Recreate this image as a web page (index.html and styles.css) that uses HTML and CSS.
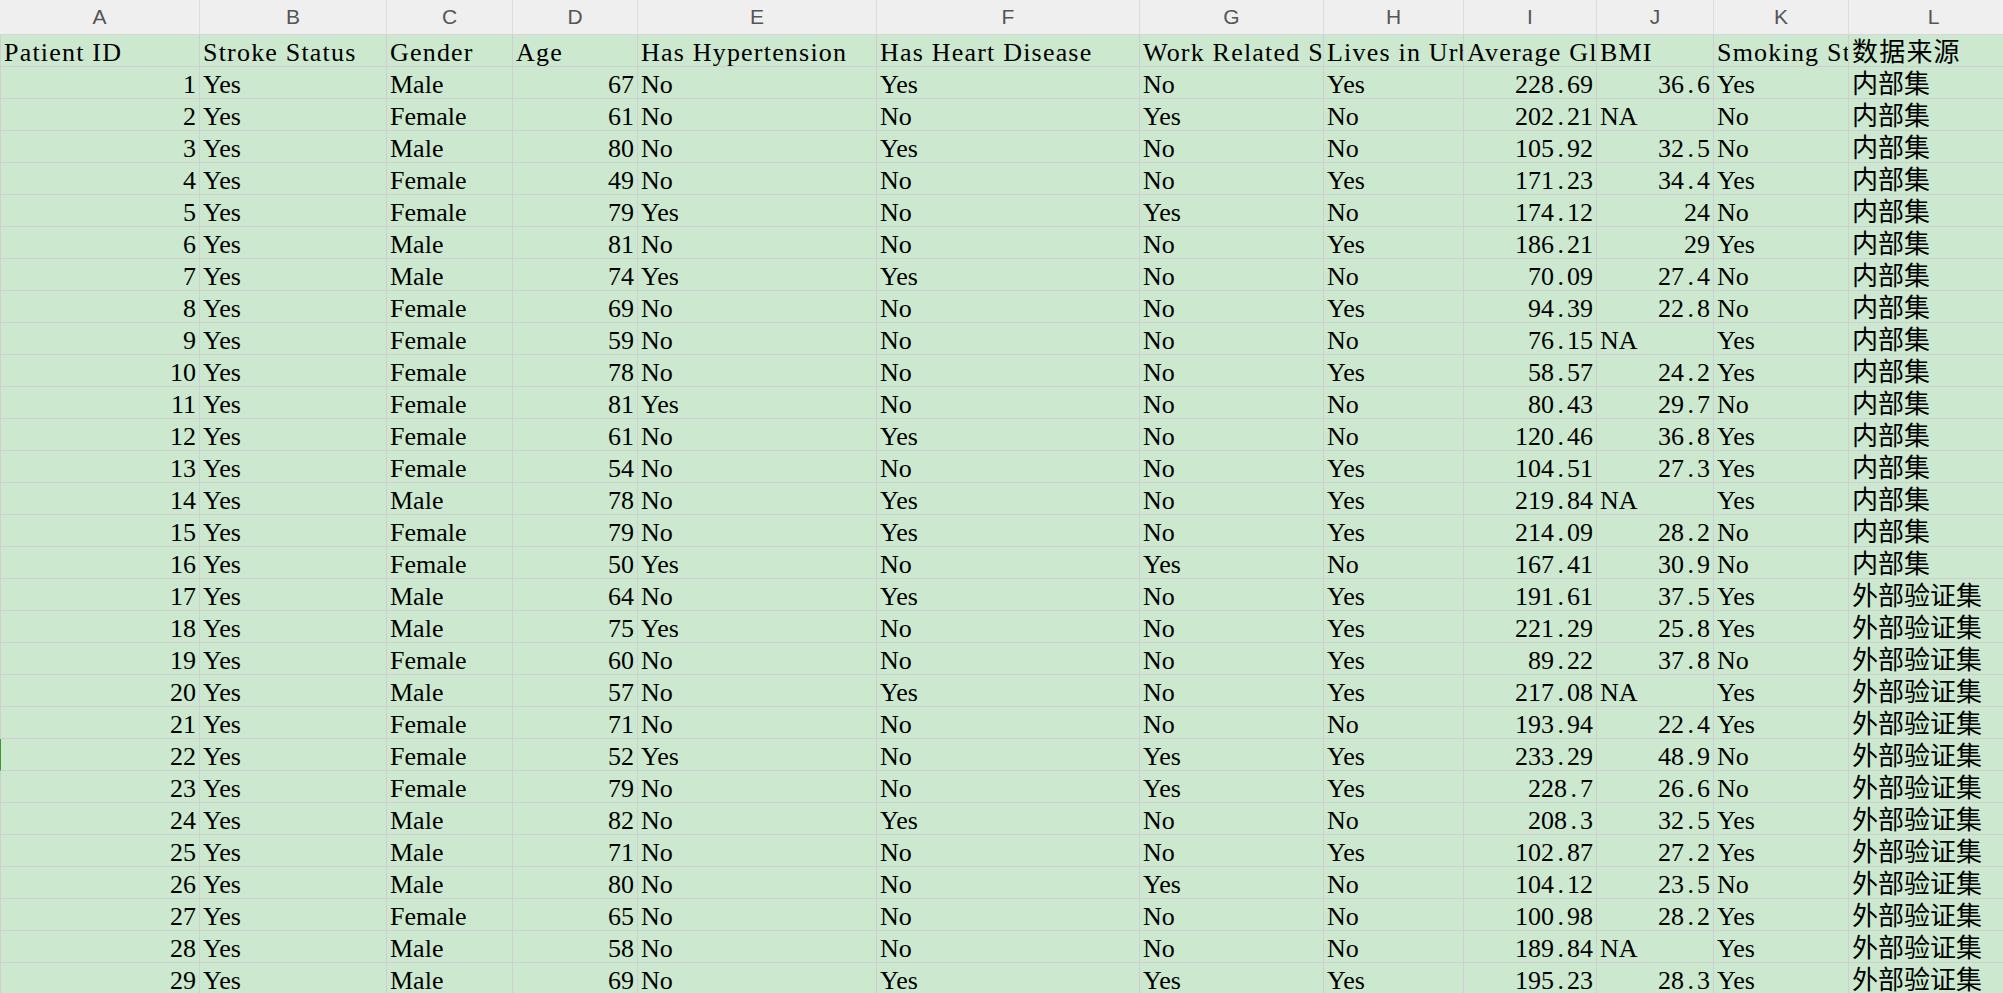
FILE: index.html
```html
<!DOCTYPE html>
<html lang="zh-CN">
<head>
<meta charset="utf-8">
<title>Sheet</title>
<link rel="stylesheet" href="styles.css">
</head>
<body>
<div class="sheet">
  <div class="colhead">
    <div class="ch">A</div><div class="ch">B</div><div class="ch">C</div><div class="ch">D</div><div class="ch">E</div><div class="ch">F</div><div class="ch">G</div><div class="ch">H</div><div class="ch">I</div><div class="ch">J</div><div class="ch">K</div><div class="ch">L</div>
  </div>
  <div class="row head">
    <div class="c">Patient ID</div><div class="c">Stroke Status</div><div class="c">Gender</div><div class="c">Age</div><div class="c">Has Hypertension</div><div class="c">Has Heart Disease</div><div class="c">Work Related Stress</div><div class="c">Lives in Urban Area</div><div class="c">Average Glucose Level</div><div class="c">BMI</div><div class="c">Smoking Status</div><div class="c">数据来源</div>
  </div>
  <div class="row"><div class="c n">1</div><div class="c">Yes</div><div class="c">Male</div><div class="c n">67</div><div class="c">No</div><div class="c">Yes</div><div class="c">No</div><div class="c">Yes</div><div class="c n">228<span class="dp">.</span>69</div><div class="c n">36<span class="dp">.</span>6</div><div class="c">Yes</div><div class="c">内部集</div></div>
  <div class="row"><div class="c n">2</div><div class="c">Yes</div><div class="c">Female</div><div class="c n">61</div><div class="c">No</div><div class="c">No</div><div class="c">Yes</div><div class="c">No</div><div class="c n">202<span class="dp">.</span>21</div><div class="c">NA</div><div class="c">No</div><div class="c">内部集</div></div>
  <div class="row"><div class="c n">3</div><div class="c">Yes</div><div class="c">Male</div><div class="c n">80</div><div class="c">No</div><div class="c">Yes</div><div class="c">No</div><div class="c">No</div><div class="c n">105<span class="dp">.</span>92</div><div class="c n">32<span class="dp">.</span>5</div><div class="c">No</div><div class="c">内部集</div></div>
  <div class="row"><div class="c n">4</div><div class="c">Yes</div><div class="c">Female</div><div class="c n">49</div><div class="c">No</div><div class="c">No</div><div class="c">No</div><div class="c">Yes</div><div class="c n">171<span class="dp">.</span>23</div><div class="c n">34<span class="dp">.</span>4</div><div class="c">Yes</div><div class="c">内部集</div></div>
  <div class="row"><div class="c n">5</div><div class="c">Yes</div><div class="c">Female</div><div class="c n">79</div><div class="c">Yes</div><div class="c">No</div><div class="c">Yes</div><div class="c">No</div><div class="c n">174<span class="dp">.</span>12</div><div class="c n">24</div><div class="c">No</div><div class="c">内部集</div></div>
  <div class="row"><div class="c n">6</div><div class="c">Yes</div><div class="c">Male</div><div class="c n">81</div><div class="c">No</div><div class="c">No</div><div class="c">No</div><div class="c">Yes</div><div class="c n">186<span class="dp">.</span>21</div><div class="c n">29</div><div class="c">Yes</div><div class="c">内部集</div></div>
  <div class="row"><div class="c n">7</div><div class="c">Yes</div><div class="c">Male</div><div class="c n">74</div><div class="c">Yes</div><div class="c">Yes</div><div class="c">No</div><div class="c">No</div><div class="c n">70<span class="dp">.</span>09</div><div class="c n">27<span class="dp">.</span>4</div><div class="c">No</div><div class="c">内部集</div></div>
  <div class="row"><div class="c n">8</div><div class="c">Yes</div><div class="c">Female</div><div class="c n">69</div><div class="c">No</div><div class="c">No</div><div class="c">No</div><div class="c">Yes</div><div class="c n">94<span class="dp">.</span>39</div><div class="c n">22<span class="dp">.</span>8</div><div class="c">No</div><div class="c">内部集</div></div>
  <div class="row"><div class="c n">9</div><div class="c">Yes</div><div class="c">Female</div><div class="c n">59</div><div class="c">No</div><div class="c">No</div><div class="c">No</div><div class="c">No</div><div class="c n">76<span class="dp">.</span>15</div><div class="c">NA</div><div class="c">Yes</div><div class="c">内部集</div></div>
  <div class="row"><div class="c n">10</div><div class="c">Yes</div><div class="c">Female</div><div class="c n">78</div><div class="c">No</div><div class="c">No</div><div class="c">No</div><div class="c">Yes</div><div class="c n">58<span class="dp">.</span>57</div><div class="c n">24<span class="dp">.</span>2</div><div class="c">Yes</div><div class="c">内部集</div></div>
  <div class="row"><div class="c n">11</div><div class="c">Yes</div><div class="c">Female</div><div class="c n">81</div><div class="c">Yes</div><div class="c">No</div><div class="c">No</div><div class="c">No</div><div class="c n">80<span class="dp">.</span>43</div><div class="c n">29<span class="dp">.</span>7</div><div class="c">No</div><div class="c">内部集</div></div>
  <div class="row"><div class="c n">12</div><div class="c">Yes</div><div class="c">Female</div><div class="c n">61</div><div class="c">No</div><div class="c">Yes</div><div class="c">No</div><div class="c">No</div><div class="c n">120<span class="dp">.</span>46</div><div class="c n">36<span class="dp">.</span>8</div><div class="c">Yes</div><div class="c">内部集</div></div>
  <div class="row"><div class="c n">13</div><div class="c">Yes</div><div class="c">Female</div><div class="c n">54</div><div class="c">No</div><div class="c">No</div><div class="c">No</div><div class="c">Yes</div><div class="c n">104<span class="dp">.</span>51</div><div class="c n">27<span class="dp">.</span>3</div><div class="c">Yes</div><div class="c">内部集</div></div>
  <div class="row"><div class="c n">14</div><div class="c">Yes</div><div class="c">Male</div><div class="c n">78</div><div class="c">No</div><div class="c">Yes</div><div class="c">No</div><div class="c">Yes</div><div class="c n">219<span class="dp">.</span>84</div><div class="c">NA</div><div class="c">Yes</div><div class="c">内部集</div></div>
  <div class="row"><div class="c n">15</div><div class="c">Yes</div><div class="c">Female</div><div class="c n">79</div><div class="c">No</div><div class="c">Yes</div><div class="c">No</div><div class="c">Yes</div><div class="c n">214<span class="dp">.</span>09</div><div class="c n">28<span class="dp">.</span>2</div><div class="c">No</div><div class="c">内部集</div></div>
  <div class="row"><div class="c n">16</div><div class="c">Yes</div><div class="c">Female</div><div class="c n">50</div><div class="c">Yes</div><div class="c">No</div><div class="c">Yes</div><div class="c">No</div><div class="c n">167<span class="dp">.</span>41</div><div class="c n">30<span class="dp">.</span>9</div><div class="c">No</div><div class="c">内部集</div></div>
  <div class="row"><div class="c n">17</div><div class="c">Yes</div><div class="c">Male</div><div class="c n">64</div><div class="c">No</div><div class="c">Yes</div><div class="c">No</div><div class="c">Yes</div><div class="c n">191<span class="dp">.</span>61</div><div class="c n">37<span class="dp">.</span>5</div><div class="c">Yes</div><div class="c">外部验证集</div></div>
  <div class="row"><div class="c n">18</div><div class="c">Yes</div><div class="c">Male</div><div class="c n">75</div><div class="c">Yes</div><div class="c">No</div><div class="c">No</div><div class="c">Yes</div><div class="c n">221<span class="dp">.</span>29</div><div class="c n">25<span class="dp">.</span>8</div><div class="c">Yes</div><div class="c">外部验证集</div></div>
  <div class="row"><div class="c n">19</div><div class="c">Yes</div><div class="c">Female</div><div class="c n">60</div><div class="c">No</div><div class="c">No</div><div class="c">No</div><div class="c">Yes</div><div class="c n">89<span class="dp">.</span>22</div><div class="c n">37<span class="dp">.</span>8</div><div class="c">No</div><div class="c">外部验证集</div></div>
  <div class="row"><div class="c n">20</div><div class="c">Yes</div><div class="c">Male</div><div class="c n">57</div><div class="c">No</div><div class="c">Yes</div><div class="c">No</div><div class="c">Yes</div><div class="c n">217<span class="dp">.</span>08</div><div class="c">NA</div><div class="c">Yes</div><div class="c">外部验证集</div></div>
  <div class="row"><div class="c n">21</div><div class="c">Yes</div><div class="c">Female</div><div class="c n">71</div><div class="c">No</div><div class="c">No</div><div class="c">No</div><div class="c">No</div><div class="c n">193<span class="dp">.</span>94</div><div class="c n">22<span class="dp">.</span>4</div><div class="c">Yes</div><div class="c">外部验证集</div></div>
  <div class="row sel"><div class="c n">22</div><div class="c">Yes</div><div class="c">Female</div><div class="c n">52</div><div class="c">Yes</div><div class="c">No</div><div class="c">Yes</div><div class="c">Yes</div><div class="c n">233<span class="dp">.</span>29</div><div class="c n">48<span class="dp">.</span>9</div><div class="c">No</div><div class="c">外部验证集</div></div>
  <div class="row"><div class="c n">23</div><div class="c">Yes</div><div class="c">Female</div><div class="c n">79</div><div class="c">No</div><div class="c">No</div><div class="c">Yes</div><div class="c">Yes</div><div class="c n">228<span class="dp">.</span>7</div><div class="c n">26<span class="dp">.</span>6</div><div class="c">No</div><div class="c">外部验证集</div></div>
  <div class="row"><div class="c n">24</div><div class="c">Yes</div><div class="c">Male</div><div class="c n">82</div><div class="c">No</div><div class="c">Yes</div><div class="c">No</div><div class="c">No</div><div class="c n">208<span class="dp">.</span>3</div><div class="c n">32<span class="dp">.</span>5</div><div class="c">Yes</div><div class="c">外部验证集</div></div>
  <div class="row"><div class="c n">25</div><div class="c">Yes</div><div class="c">Male</div><div class="c n">71</div><div class="c">No</div><div class="c">No</div><div class="c">No</div><div class="c">Yes</div><div class="c n">102<span class="dp">.</span>87</div><div class="c n">27<span class="dp">.</span>2</div><div class="c">Yes</div><div class="c">外部验证集</div></div>
  <div class="row"><div class="c n">26</div><div class="c">Yes</div><div class="c">Male</div><div class="c n">80</div><div class="c">No</div><div class="c">No</div><div class="c">Yes</div><div class="c">No</div><div class="c n">104<span class="dp">.</span>12</div><div class="c n">23<span class="dp">.</span>5</div><div class="c">No</div><div class="c">外部验证集</div></div>
  <div class="row"><div class="c n">27</div><div class="c">Yes</div><div class="c">Female</div><div class="c n">65</div><div class="c">No</div><div class="c">No</div><div class="c">No</div><div class="c">No</div><div class="c n">100<span class="dp">.</span>98</div><div class="c n">28<span class="dp">.</span>2</div><div class="c">Yes</div><div class="c">外部验证集</div></div>
  <div class="row"><div class="c n">28</div><div class="c">Yes</div><div class="c">Male</div><div class="c n">58</div><div class="c">No</div><div class="c">No</div><div class="c">No</div><div class="c">No</div><div class="c n">189<span class="dp">.</span>84</div><div class="c">NA</div><div class="c">Yes</div><div class="c">外部验证集</div></div>
  <div class="row"><div class="c n">29</div><div class="c">Yes</div><div class="c">Male</div><div class="c n">69</div><div class="c">No</div><div class="c">Yes</div><div class="c">Yes</div><div class="c">Yes</div><div class="c n">195<span class="dp">.</span>23</div><div class="c n">28<span class="dp">.</span>3</div><div class="c">Yes</div><div class="c">外部验证集</div></div>
</div>
</body>
</html>
```

FILE: styles.css
```css
* { box-sizing: border-box; }

html, body {
  margin: 0;
  padding: 0;
  background: #cce8cf;
  overflow: hidden;
}

.sheet {
  --cols: 200px 187px 126px 125px 239px 263px 184px 140px 133px 117px 135px 170px;
  width: 2019px;
  display: flex;
  flex-direction: column;
}

.colhead {
  display: grid;
  grid-template-columns: var(--cols);
  height: 35px;
  background: #efefef;
  border-bottom: 1px solid #d6d6d6;
}

.ch {
  border-right: 1px solid #dcdcdc;
  font-family: "Liberation Sans", "Noto Sans", sans-serif;
  font-size: 21px;
  color: #555555;
  text-align: center;
  line-height: 34px;
}

.row {
  display: grid;
  grid-template-columns: var(--cols);
  height: 32px;
  background: #cce8cf;
}

.c {
  height: 32px;
  border-right: 1px solid #cfcfd2;
  border-bottom: 1px solid #cfcfd2;
  padding: 0 3px;
  font-family: "Liberation Serif", "Noto Sans CJK SC", serif;
  font-size: 26px;
  line-height: 36px;
  color: #000000;
  white-space: nowrap;
  overflow: hidden;
}

.row .c:first-child {
  border-left: 1px solid #cfcfd2;
}

.row.sel .c:first-child {
  border-left-color: #3d9a2c;
}

.head .c {
  letter-spacing: 1.2px;
}

.n {
  text-align: right;
}

.dp {
  margin: 0 3px 0 3.5px;
}
```
